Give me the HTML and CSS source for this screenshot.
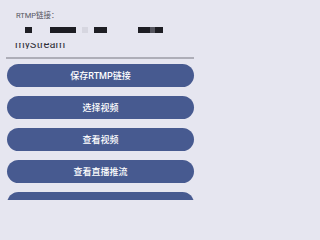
FILE: index.html
```html
<!DOCTYPE html>
<html lang="zh">
<head>
<meta charset="utf-8">
<link rel="stylesheet" href="styles.css">
</head>
<body>
<div class="app">
  <div class="label">RTMP链接：</div>
  <div class="redacted">
    <span class="bar b1"></span>
    <span class="bar b2"></span>
    <span class="bar light b3"></span>
    <span class="bar b4"></span>
    <span class="bar b5"><span class="seg"></span></span>
  </div>
  <div class="clip"><span class="stream">myStream</span></div>
  <div class="underline"></div>
  <div class="buttons">
    <div class="btn">保存RTMP链接</div>
    <div class="btn">选择视频</div>
    <div class="btn">查看视频</div>
    <div class="btn">查看直播推流</div>
    <div class="btn"></div>
  </div>
</div>
</body>
</html>
```
FILE: styles.css
```css
html, body {
  margin: 0;
  padding: 0;
  background: #e6e6f0;
  overflow: hidden;
}
body {
  width: 200px;
  height: 200px;
  font-family: Roboto, "Noto Sans CJK SC", sans-serif;
}
.app {
  display: flex;
  flex-direction: column;
  padding-top: 12px;
}
.label {
  margin-left: 16px;
  font-size: 7.5px;
  line-height: 8px;
  height: 8px;
  color: #555560;
}
.redacted {
  display: flex;
  margin-top: 7px;
  margin-left: 25px;
  height: 6px;
}
.bar {
  display: block;
  height: 6px;
  background: #1e1e24;
}
.b1 { width: 7px; }
.b2 { width: 26px; margin-left: 18px; }
.b3 { width: 6px; margin-left: 6px; }
.light { background: #d6d6e0; }
.b4 { width: 13px; margin-left: 6px; }
.b5 { width: 25px; margin-left: 31px; display: flex; }
.seg {
  display: block;
  width: 5px;
  height: 6px;
  margin-left: 12px;
  background: #55555e;
}
.clip {
  margin-top: 10px;
  margin-left: 15px;
  height: 6px;
  overflow: hidden;
}
.stream {
  display: block;
  margin-top: -4px;
  font-size: 11px;
  line-height: 11px;
  color: #303038;
}
.underline {
  margin: 8px 6px 0 6px;
  height: 2px;
  background: #aeaeb8;
}
.buttons {
  display: flex;
  flex-direction: column;
  gap: 9px;
  margin: 5px 6px 0 7px;
}
.btn {
  flex: none;
  height: 23px;
  border-radius: 12px;
  background: #475a90;
  color: #ffffff;
  font-size: 9px;
  font-weight: 500;
  display: flex;
  align-items: center;
  justify-content: center;
}
```
